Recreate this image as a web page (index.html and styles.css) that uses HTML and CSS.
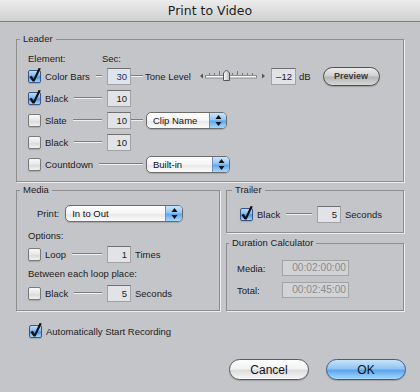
FILE: index.html
```html
<!DOCTYPE html>
<html lang="en">

<head>
    <meta charset="UTF-8">
    <title>Print to Video</title>
    <link rel="stylesheet" href="styles.css">
</head>

<body>
    <div class="window">
        <div class="titlebar">Print to Video</div>

        <div class="content">
            <fieldset class="group leader">
                <legend>Leader</legend>
                <div class="row head">
                    <span>Element:</span>
                    <span class="sec">Sec:</span>
                </div>
                <div class="row">
                    <div class="item">
                        <span class="check on"><svg viewBox="0 -4 14 17" width="14" height="17"><path d="M1.5 7 L3.6 5.8 L5.6 8.8 L10.6 -2 L12.8 -1.4 L6.6 11.6 L4.6 11.6 Z" /></svg></span>
                        Color Bars<span class="line"></span>
                    </div>
                    <span class="field focus">30</span>
                    <span class="line conn"></span>
                    <div class="extra">
                        <span class="tone">Tone Level</span>
                        <svg class="slider" width="68" height="18" viewBox="0 0 68 18">
                            <polygon points="1,9 4,6.5 4,11.5" fill="#555" />
                            <rect x="6.5" y="8.5" width="51" height="2.5" fill="#fbfbfb" stroke="#8a8a8a" />
                            <g stroke="#777" stroke-width="1">
                                <line x1="10.5" y1="6" x2="10.5" y2="8" />
                                <line x1="15.5" y1="6" x2="15.5" y2="8" />
                                <line x1="20.5" y1="4" x2="20.5" y2="8" />
                                <line x1="33.5" y1="6" x2="33.5" y2="8" />
                                <line x1="38.5" y1="4" x2="38.5" y2="8" />
                                <line x1="43.5" y1="6" x2="43.5" y2="8" />
                                <line x1="48.5" y1="6" x2="48.5" y2="8" />
                                <line x1="53.5" y1="6" x2="53.5" y2="8" />
                            </g>
                            <defs>
                                <linearGradient id="thumb" x1="0" y1="0" x2="1" y2="0">
                                    <stop offset="0" stop-color="#fff" />
                                    <stop offset="1" stop-color="#b9b9b9" />
                                </linearGradient>
                            </defs>
                            <path d="M24.5 13.5 L24.5 6 L27.5 3 L30.5 6 L30.5 13.5 Z" fill="url(#thumb)" stroke="#555" />
                            <polygon points="63,6.5 66,9 63,11.5" fill="#555" />
                        </svg>
                        <span class="field db">&ndash;12</span>
                        <span class="unit">dB</span>
                        <button class="preview">Preview</button>
                    </div>
                </div>
                <div class="row">
                    <div class="item">
                        <span class="check on"><svg viewBox="0 -4 14 17" width="14" height="17"><path d="M1.5 7 L3.6 5.8 L5.6 8.8 L10.6 -2 L12.8 -1.4 L6.6 11.6 L4.6 11.6 Z" /></svg></span>
                        Black<span class="line"></span>
                    </div>
                    <span class="field">10</span>
                </div>
                <div class="row">
                    <div class="item">
                        <span class="check"></span>
                        Slate<span class="line"></span>
                    </div>
                    <span class="field">10</span>
                    <span class="line conn"></span>
                    <div class="popup clip">
                        <span class="label">Clip Name</span>
                        <span class="arrows"><svg width="7" height="11" viewBox="0 0 7 11"><polygon points="3.5,0 6.5,4 0.5,4" /><polygon points="0.5,7 6.5,7 3.5,11" /></svg></span>
                    </div>
                </div>
                <div class="row">
                    <div class="item">
                        <span class="check"></span>
                        Black<span class="line"></span>
                    </div>
                    <span class="field">10</span>
                </div>
                <div class="row">
                    <div class="item wide-item">
                        <span class="check"></span>
                        Countdown<span class="line"></span>
                    </div>
                    <div class="popup builtin">
                        <span class="label">Built-in</span>
                        <span class="arrows"><svg width="7" height="11" viewBox="0 0 7 11"><polygon points="3.5,0 6.5,4 0.5,4" /><polygon points="0.5,7 6.5,7 3.5,11" /></svg></span>
                    </div>
                </div>
            </fieldset>

            <div class="lower">
                <fieldset class="group media">
                    <legend>Media</legend>
                    <div class="print-row">
                        <span class="print-label">Print:</span>
                        <div class="popup print">
                            <span class="label">In to Out</span>
                            <span class="arrows"><svg width="7" height="11" viewBox="0 0 7 11"><polygon points="3.5,0 6.5,4 0.5,4" /><polygon points="0.5,7 6.5,7 3.5,11" /></svg></span>
                        </div>
                    </div>
                    <div class="caption">Options:</div>
                    <div class="mrow">
                        <div class="item">
                            <span class="check"></span>
                            Loop<span class="line"></span>
                        </div>
                        <span class="field">1</span>
                        <span class="after">Times</span>
                    </div>
                    <div class="caption between">Between each loop place:</div>
                    <div class="mrow last">
                        <div class="item">
                            <span class="check"></span>
                            Black<span class="line"></span>
                        </div>
                        <span class="field">5</span>
                        <span class="after">Seconds</span>
                    </div>
                </fieldset>

                <div class="side">
                    <fieldset class="group trailer">
                        <legend>Trailer</legend>
                        <div class="trow">
                            <div class="item">
                                <span class="check on"><svg viewBox="0 -4 14 17" width="14" height="17"><path d="M1.5 7 L3.6 5.8 L5.6 8.8 L10.6 -2 L12.8 -1.4 L6.6 11.6 L4.6 11.6 Z" /></svg></span>
                                Black<span class="line"></span>
                            </div>
                            <span class="field">5</span>
                            <span class="after">Seconds</span>
                        </div>
                    </fieldset>
                    <fieldset class="group duration">
                        <legend>Duration Calculator</legend>
                        <div class="drow">
                            <span>Media:</span>
                            <span class="time">00:02:00:00</span>
                        </div>
                        <div class="drow">
                            <span>Total:</span>
                            <span class="time">00:02:45:00</span>
                        </div>
                    </fieldset>
                </div>
            </div>

            <div class="auto">
                <span class="check on"><svg viewBox="0 -4 14 17" width="14" height="17"><path d="M1.5 7 L3.6 5.8 L5.6 8.8 L10.6 -2 L12.8 -1.4 L6.6 11.6 L4.6 11.6 Z" /></svg></span>
                Automatically Start Recording
            </div>

            <div class="buttons">
                <button class="btn">Cancel</button>
                <button class="btn default">OK</button>
            </div>
        </div>
    </div>
</body>

</html>
```

FILE: styles.css
```css
body {
    margin: 0;
    background-color: #c4c5c9;
    font-family: "Liberation Sans", Arial, sans-serif;
    font-size: 9.5px;
    color: #1c1c1c;
}

.window {
    width: 420px;
    height: 392px;
    overflow: hidden;
}

.titlebar {
    height: 21px;
    line-height: 22px;
    text-align: center;
    font-family: "DejaVu Sans", sans-serif;
    font-size: 12.5px;
    color: #1e1e1e;
    background: linear-gradient(#ececec, #d0d0d0);
    border-bottom: 1px solid #7f7f7f;
}

.content {
    padding: 11px 16px 0;
}

/* group boxes */
.group {
    margin: 0;
    padding: 0 11px 6px;
    border: 1px solid #8e8e8e;
    box-shadow: 1px 1px 0 #ececec;
    min-width: 0;
}

.group legend {
    padding: 0 3px;
    margin-left: -8px;
    line-height: 12px;
}

/* leader rows */
.row {
    display: grid;
    grid-template-columns: 79px 24px 15px auto;
    align-items: center;
    height: 22px;
}

.row.head {
    height: 13px;
    margin-top: 7px;
}

.sec {
    margin-left: -5px;
}

.item {
    display: flex;
    align-items: center;
}

.item .line {
    flex: 1;
    margin: 0 5px 0 6px;
}

.wide-item {
    grid-column: 1 / 4;
}

.wide-item .line {
    margin-right: 3px;
}

.line {
    height: 0;
    border-top: 1px solid #7d7d7d;
    border-bottom: 1px solid #f0f0f0;
}

.conn {
    width: 12px;
}

.extra {
    display: flex;
    align-items: center;
}

.tone {
    margin-left: -1px;
}

.slider {
    margin-left: 8px;
}

.unit {
    margin-left: 3px;
}

/* controls */
.check {
    position: relative;
    flex: none;
    width: 13px;
    height: 13px;
    box-sizing: border-box;
    margin-right: 4px;
    border: 1px solid #7a7a7a;
    border-radius: 2px;
    background: linear-gradient(#fafafa, #e6e6e6 50%, #d7d7d7 52%, #f2f2f2);
    box-shadow: 0 1px 1px rgba(0, 0, 0, 0.15);
}

.check.on {
    border-color: #3b5789;
    background: linear-gradient(#c0ddf8, #78b5ef 48%, #4592e2 52%, #a6d7fc);
}

.check svg {
    position: absolute;
    left: -1px;
    top: -5px;
    overflow: visible;
}

.check svg path {
    fill: #101010;
}

.field {
    display: block;
    height: 17px;
    box-sizing: border-box;
    padding-right: 3px;
    border: 1px solid #a2a2a2;
    border-top-color: #6f6f6f;
    background: #e2e3e6;
    text-align: right;
    line-height: 15px;
}

.field.focus {
    background: #dfe5ef;
    color: #1b2f66;
}

.field.db {
    width: 25px;
    margin-left: 4px;
}

.popup {
    display: flex;
    height: 17px;
    box-sizing: border-box;
    border: 1px solid #6c6c6c;
    border-radius: 5px;
    background: linear-gradient(#ffffff, #f4f4f4 50%, #e7e7e7 52%, #fbfbfb);
    overflow: hidden;
    box-shadow: 0 1px 1px rgba(0, 0, 0, 0.15);
}

.popup .label {
    flex: 1;
    padding-left: 6px;
    line-height: 15px;
    color: #111;
}

.popup .arrows {
    display: flex;
    align-items: center;
    justify-content: center;
    width: 16px;
    border-left: 1px solid #6f8fc0;
    background: linear-gradient(#cbe5fc, #8fc4f3 48%, #5ba6ec 52%, #a5d8fd);
}

.popup .arrows svg {
    fill: #111;
}

.clip {
    width: 81px;
}

.builtin {
    width: 84px;
}

.print {
    width: 118px;
}

.preview {
    width: 57px;
    height: 19px;
    margin-left: 12px;
    padding: 0;
    border: 1px solid #4f4f4f;
    border-radius: 10px;
    background: linear-gradient(#ececec, #cfcfcf 48%, #b4b4b4 52%, #d8d8d8);
    font-family: "Liberation Sans", Arial, sans-serif;
    font-size: 9px;
    font-weight: bold;
    color: #3a3a3a;
    box-shadow: 0 1px 1px rgba(0, 0, 0, 0.2);
}

/* lower panels */
.lower {
    display: grid;
    grid-template-columns: 204px 178px;
    gap: 6px;
    margin-top: 2px;
}

.print-row {
    display: flex;
    align-items: center;
    height: 22px;
    margin-top: 6px;
}

.print-label {
    margin-left: 9px;
    margin-right: 6px;
}

.caption {
    height: 16px;
    line-height: 16px;
    margin-top: 4px;
}

.caption.between {
    margin-top: 2px;
}

.mrow {
    display: grid;
    grid-template-columns: 79px 24px auto;
    align-items: center;
    height: 20px;
}

.mrow.last {
    height: 22px;
}

.after {
    margin-left: 4px;
}

.side {
    display: flex;
    flex-direction: column;
}

.trailer {
    padding: 8px 13px 8px;
}

.trow {
    display: grid;
    grid-template-columns: 77px 24px auto;
    align-items: center;
    height: 20px;
}

.duration {
    flex: 1;
    margin-top: 4px;
    padding: 9px 10px 0;
}

.drow {
    display: flex;
    align-items: center;
    height: 20px;
    margin-bottom: 2px;
}

.drow span:first-child {
    width: 45px;
}

.time {
    width: 67px;
    height: 16px;
    box-sizing: border-box;
    padding-right: 2px;
    border: 1px solid #a3a3a3;
    background: #d2d3d7;
    color: #8a8a8a;
    font-size: 10.2px;
    text-align: right;
    line-height: 14px;
}

.auto {
    display: flex;
    align-items: center;
    height: 20px;
    margin-top: 10px;
    padding-left: 13px;
}

.buttons {
    display: flex;
    justify-content: flex-end;
    gap: 17px;
    margin-top: 18px;
    margin-right: -2px;
}

.btn {
    width: 80px;
    height: 21px;
    padding: 0;
    border: 1px solid #5a5a5a;
    border-radius: 11px;
    background: linear-gradient(#fdfdfd, #f1f1f1 46%, #dcdcdc 54%, #f6f6f6);
    font-family: "Liberation Sans", Arial, sans-serif;
    font-size: 12px;
    color: #111;
    box-shadow: 0 1px 1px rgba(0, 0, 0, 0.2);
}

.btn.default {
    border-color: #3e5d92;
    background: linear-gradient(#c8e3fb, #8fc4f3 46%, #58a4ec 54%, #a8dafd);
}
```
